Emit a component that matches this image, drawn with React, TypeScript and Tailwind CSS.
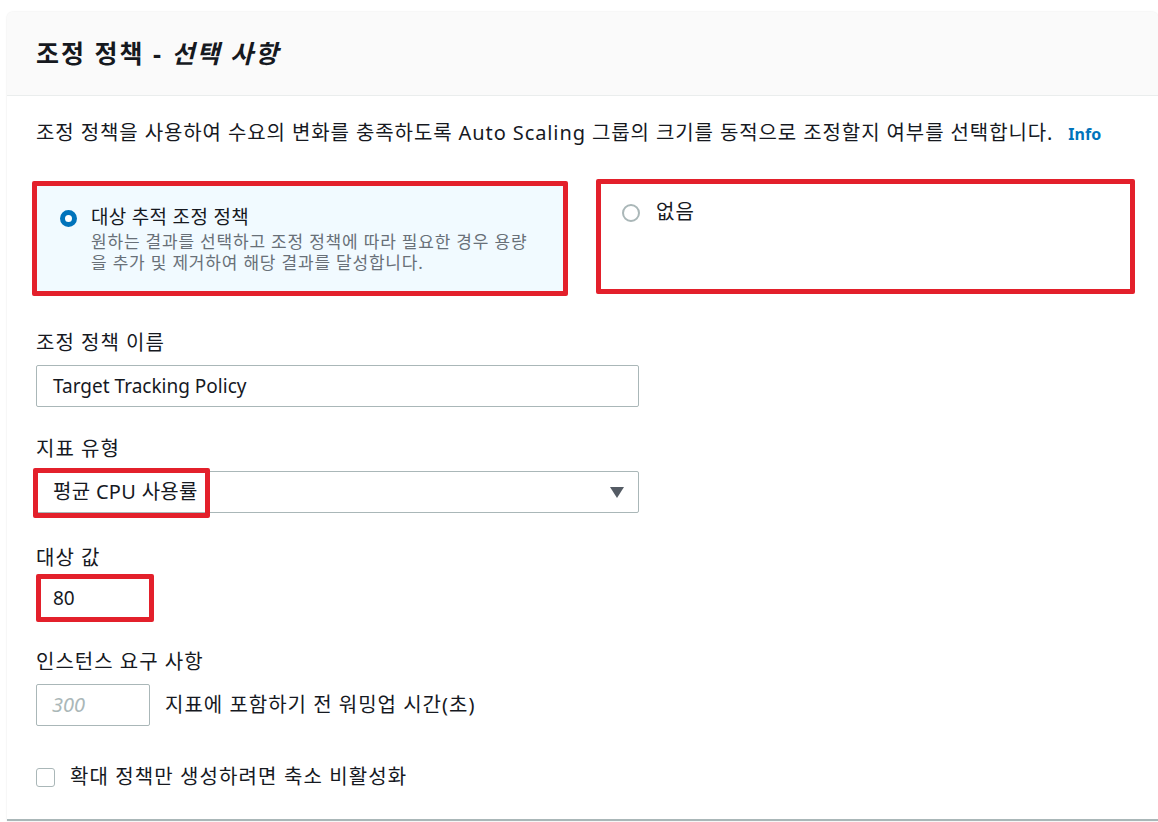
import React from 'react';

const font = { fontFamily: '"Noto Sans", "Noto Sans CJK KR", sans-serif' };

function Label({ children }: { children: React.ReactNode }) {
  return <div className="text-[20px] leading-[24px] tracking-[1px] text-[#16191f]">{children}</div>;
}

export default function App() {
  return (
    <div className="min-h-[822px] bg-white pl-[7px] pt-[12px]" style={font}>
      <div className="rounded-t-[6px] border-b-2 border-[#aab7b8] bg-white shadow-[0_0_2px_rgba(0,0,0,0.12)]">
        {/* header */}
        <div className="flex h-[84px] items-center rounded-t-[6px] border-b border-[#eaeded] bg-[#fafafa] px-[29px]">
          <h2 className="text-[25px] font-bold tracking-[2px] text-[#16191f]">
            조정 정책 - <i>선택 사항</i>
          </h2>
        </div>

        <div className="px-[29px] pb-[30px] pt-[24px]">
          <p className="text-[20px] leading-[26px] tracking-[0.9px] text-[#16191f]">
            조정 정책을 사용하여 수요의 변화를 충족하도록 Auto Scaling 그룹의 크기를 동적으로 조정할지 여부를 선택합니다.
            <span className="ml-[15px] text-[16px] font-bold tracking-normal text-[#0073bb]">Info</span>
          </p>

          {/* tiles */}
          <div className="mt-[34px] flex gap-[28px]">
            <div className="-ml-[4px] h-[115px] w-[536px] shrink-0 rounded-[2px] border-[5px] border-[#e3202b] bg-[#f1faff] pl-[23px] pt-[19px]">
              <div className="flex items-start gap-[14px]">
                <span className="mt-[5px] h-[17px] w-[17px] shrink-0 rounded-full border-[5px] border-[#0073bb] bg-white" />
                <div>
                  <div className="text-[19px] leading-[24px] tracking-[0.3px] text-[#16191f]">대상 추적 조정 정책</div>
                  <div className="mt-[2px] text-[17px] leading-[21px] tracking-[0.8px] text-[#687078]">
                    원하는 결과를 선택하고 조정 정책에 따라 필요한 경우 용량
                    <br />을 추가 및 제거하여 해당 결과를 달성합니다.
                  </div>
                </div>
              </div>
            </div>
            <div className="-mt-[2px] h-[115px] w-[539px] shrink-0 rounded-[2px] border-[5px] border-[#e3202b] bg-white pl-[21px] pt-[16px]">
              <div className="flex items-start gap-[16px]">
                <span className="mt-[4px] h-[18px] w-[18px] shrink-0 rounded-full border-2 border-[#aab7b8] bg-white" />
                <div className="text-[20px] leading-[24px] tracking-[1px] text-[#16191f]">없음</div>
              </div>
            </div>
          </div>

          {/* policy name */}
          <div className="mt-[35px]">
            <Label>조정 정책 이름</Label>
            <div className="mt-[10px] flex h-[42px] w-[603px] items-center rounded-[2px] border border-[#aab7b8] px-[16px] text-[19px] text-[#16191f]">
              Target Tracking Policy
            </div>
          </div>

          {/* metric type */}
          <div className="mt-[30px]">
            <Label>지표 유형</Label>
            <div className="relative mt-[10px] flex h-[42px] w-[603px] items-center justify-between rounded-[2px] border border-[#aab7b8] pl-[16px] pr-[14px] text-[20px] tracking-[0.3px] text-[#16191f]">
              <span>평균 CPU 사용률</span>
              <svg width="14" height="11" viewBox="0 0 14 11">
                <path d="M0 0h14L7 11z" fill="#545b64" />
              </svg>
              <span className="pointer-events-none absolute -left-[4px] -top-[4px] h-[50px] w-[177px] rounded-[2px] border-[5px] border-[#e3202b]" />
            </div>
          </div>

          {/* target value */}
          <div className="mt-[33px]">
            <Label>대상 값</Label>
            <div className="mt-[4px] flex h-[48px] w-[118px] items-center rounded-[2px] border-[5px] border-[#e3202b] pl-[12px] text-[19px] text-[#16191f]">
              80
            </div>
          </div>

          {/* instance requirements */}
          <div className="mt-[28px]">
            <Label>인스턴스 요구 사항</Label>
            <div className="mt-[10px] flex items-center gap-[15px]">
              <div className="flex h-[42px] w-[114px] items-center rounded-[2px] border border-[#aab7b8] pl-[15px] text-[20px] italic text-[#aab7b8]">
                300
              </div>
              <span className="text-[20px] leading-[24px] tracking-[1px] text-[#16191f]">지표에 포함하기 전 워밍업 시간(초)</span>
            </div>
          </div>

          {/* checkbox */}
          <label className="mt-[39px] flex items-center gap-[15px]">
            <span className="h-[19px] w-[19px] rounded-[3px] border border-[#aab7b8] bg-white" />
            <span className="text-[20px] leading-[24px] tracking-[1.1px] text-[#16191f]">확대 정책만 생성하려면 축소 비활성화</span>
          </label>
        </div>
      </div>
    </div>
  );
}
